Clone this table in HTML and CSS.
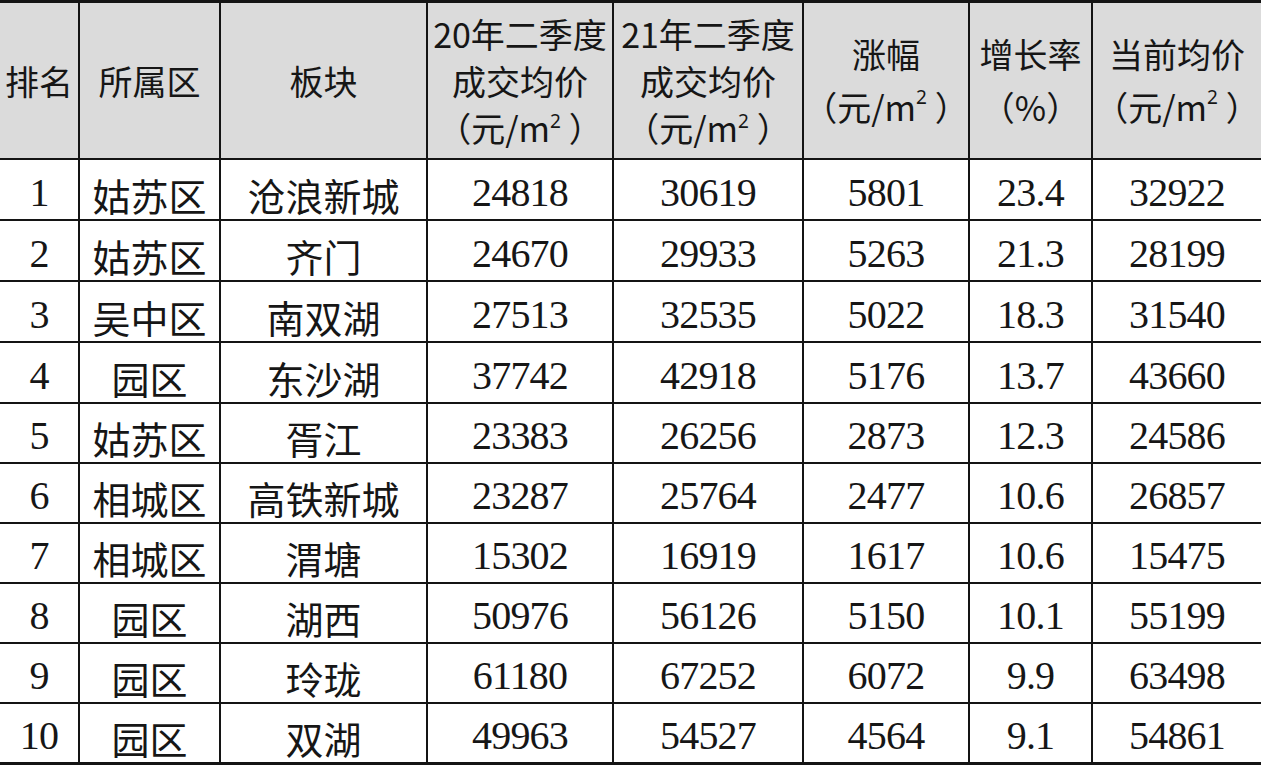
FILE: index.html
```html
<!DOCTYPE html>
<html lang="zh-CN">
<head>
<meta charset="utf-8">
<title>板块涨幅排名</title>
<link rel="stylesheet" href="styles.css">
</head>
<body>
<div class="table">
  <div class="cell head"><span>排名</span></div>
  <div class="cell head"><span>所属区</span></div>
  <div class="cell head"><span>板块</span></div>
  <div class="cell head three"><span>20年二季度<br>成交均价<br>（元/m<span class="sup">2</span>）</span></div>
  <div class="cell head three"><span>21年二季度<br>成交均价<br>（元/m<span class="sup">2</span>）</span></div>
  <div class="cell head two"><span>涨幅<br>（元/m<span class="sup">2</span>）</span></div>
  <div class="cell head two"><span>增长率<br>（%）</span></div>
  <div class="cell head two"><span>当前均价<br>（元/m<span class="sup">2</span>）</span></div>

  <div class="cell num">1</div><div class="cell zh">姑苏区</div><div class="cell zh">沧浪新城</div><div class="cell num">24818</div><div class="cell num">30619</div><div class="cell num">5801</div><div class="cell num">23.4</div><div class="cell num">32922</div>
  <div class="cell num">2</div><div class="cell zh">姑苏区</div><div class="cell zh">齐门</div><div class="cell num">24670</div><div class="cell num">29933</div><div class="cell num">5263</div><div class="cell num">21.3</div><div class="cell num">28199</div>
  <div class="cell num">3</div><div class="cell zh">吴中区</div><div class="cell zh">南双湖</div><div class="cell num">27513</div><div class="cell num">32535</div><div class="cell num">5022</div><div class="cell num">18.3</div><div class="cell num">31540</div>
  <div class="cell num">4</div><div class="cell zh">园区</div><div class="cell zh">东沙湖</div><div class="cell num">37742</div><div class="cell num">42918</div><div class="cell num">5176</div><div class="cell num">13.7</div><div class="cell num">43660</div>
  <div class="cell num">5</div><div class="cell zh">姑苏区</div><div class="cell zh">胥江</div><div class="cell num">23383</div><div class="cell num">26256</div><div class="cell num">2873</div><div class="cell num">12.3</div><div class="cell num">24586</div>
  <div class="cell num">6</div><div class="cell zh">相城区</div><div class="cell zh">高铁新城</div><div class="cell num">23287</div><div class="cell num">25764</div><div class="cell num">2477</div><div class="cell num">10.6</div><div class="cell num">26857</div>
  <div class="cell num">7</div><div class="cell zh">相城区</div><div class="cell zh">渭塘</div><div class="cell num">15302</div><div class="cell num">16919</div><div class="cell num">1617</div><div class="cell num">10.6</div><div class="cell num">15475</div>
  <div class="cell num">8</div><div class="cell zh">园区</div><div class="cell zh">湖西</div><div class="cell num">50976</div><div class="cell num">56126</div><div class="cell num">5150</div><div class="cell num">10.1</div><div class="cell num">55199</div>
  <div class="cell num">9</div><div class="cell zh">园区</div><div class="cell zh">玲珑</div><div class="cell num">61180</div><div class="cell num">67252</div><div class="cell num">6072</div><div class="cell num">9.9</div><div class="cell num">63498</div>
  <div class="cell num">10</div><div class="cell zh">园区</div><div class="cell zh">双湖</div><div class="cell num">49963</div><div class="cell num">54527</div><div class="cell num">4564</div><div class="cell num">9.1</div><div class="cell num">54861</div>
</div>
</body>
</html>
```

FILE: styles.css
```css
html, body {
  margin: 0;
  padding: 0;
  background: #ffffff;
}

.table {
  display: grid;
  width: 1261px;
  height: 765px;
  box-sizing: border-box;
  grid-template-columns: 78px 139px 205px 184px 188px 164px 121px 168px;
  grid-template-rows: 155px 59px 59px 59px 59px 58px 58px 58px 58px 58px 58px;
  column-gap: 2px;
  row-gap: 2px;
  padding: 3px 0 3px 0;
  background: #141414;
  color: #161616;
}

.cell {
  display: flex;
  align-items: center;
  justify-content: center;
  background: #ffffff;
  text-align: center;
  white-space: nowrap;
  box-sizing: border-box;
}

.head {
  background: #dbdbdb;
  font-family: "Noto Sans CJK SC", "Noto Sans", sans-serif;
  font-size: 34px;
  line-height: 47px;
}

.head.two {
  line-height: 53px;
  padding-bottom: 2px;
}

.sup {
  display: inline-block;
  font-family: "Noto Sans", "Open Sans", sans-serif;
  font-size: 19px;
  line-height: 19px;
  vertical-align: top;
  margin-top: 8px;
  margin-right: 8px;
}

.zh {
  font-family: "Noto Sans CJK SC", sans-serif;
  font-size: 38px;
  line-height: 40px;
  padding-top: 10px;
}

.num {
  font-family: "Liberation Serif", "Times New Roman", serif;
  font-size: 40px;
  line-height: 40px;
  letter-spacing: -0.8px;
  padding-top: 6px;
}
```
